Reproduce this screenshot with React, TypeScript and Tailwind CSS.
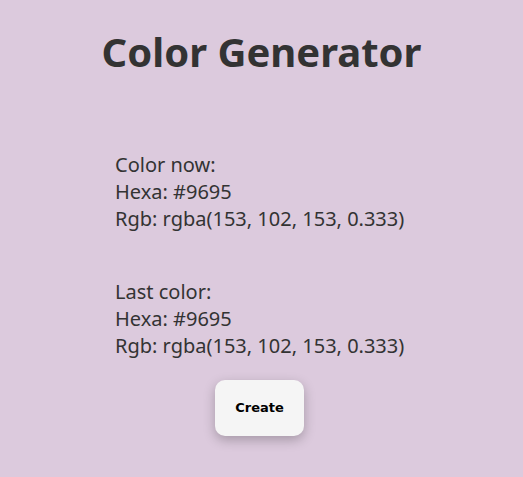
import React from 'react';

interface ColorInfo {
  label: string;
  hexa: string;
  rgb: string;
}

const colors: ColorInfo[] = [
  { label: 'Color now:', hexa: '#9695', rgb: 'rgba(153, 102, 153, 0.333)' },
  { label: 'Last color:', hexa: '#9695', rgb: 'rgba(153, 102, 153, 0.333)' },
];

const App: React.FC = () => {
  return (
    <div className="min-h-[477px] bg-[#dccadd] text-[#333333] font-['Noto_Sans','Open_Sans',sans-serif] flex flex-col items-center">
      <h1 className="mt-[26px] text-[40px] leading-[52px] font-bold">Color Generator</h1>
      <div className="mt-[73px] w-[293px] flex flex-col gap-[46px] text-[20px] leading-[27px]">
        {colors.map((c, i) => (
          <div key={i}>
            <p>{c.label}</p>
            <p>Hexa: {c.hexa}</p>
            <p>Rgb: {c.rgb}</p>
          </div>
        ))}
      </div>
      <button className="mt-[21px] mr-[4px] w-[89px] h-[56px] rounded-[10px] bg-[#f5f5f5] text-black text-[13px] font-bold font-['DejaVu_Sans',sans-serif] shadow-[0_4px_12px_rgba(0,0,0,0.25)]">
        Create
      </button>
    </div>
  );
};

export default App;
